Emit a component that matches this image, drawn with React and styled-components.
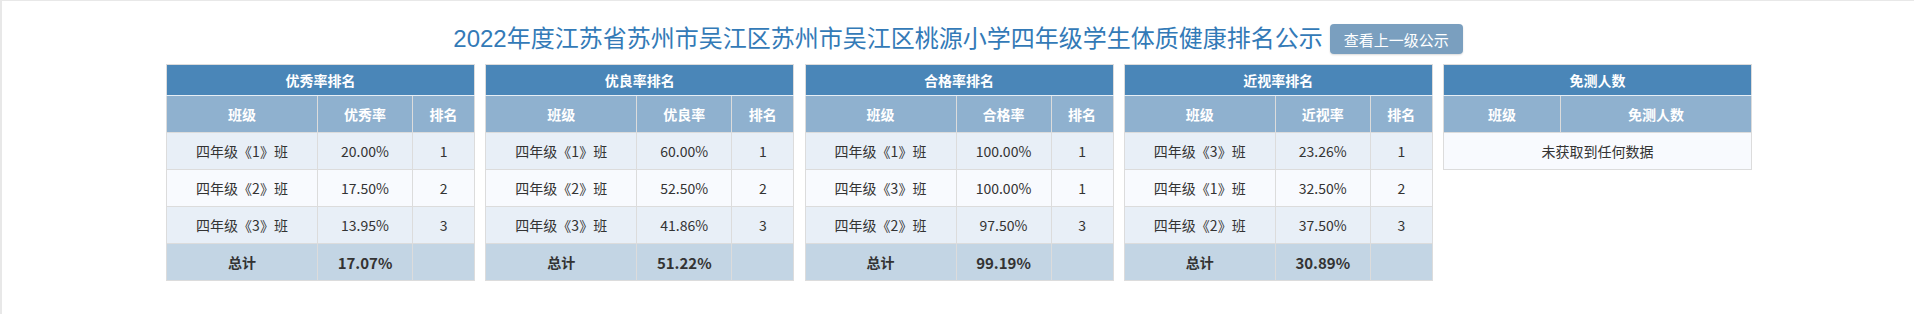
import React from 'react';
import styled, { createGlobalStyle } from 'styled-components';

const GlobalStyle = createGlobalStyle`
  html, body {
    margin: 0;
    padding: 0;
    background: #ffffff;
  }
  body {
    font-family: "Noto Sans CJK SC", "Noto Sans", sans-serif;
    font-size: 14px;
    color: #333333;
  }
`;

const Page = styled.div`
  box-sizing: border-box;
  width: 1914px;
  height: 314px;
  border-top: 1px solid #e8e8e8;
  border-left: 2px solid #e8e8e8;
  padding-top: 23px;
`;

const TitleBar = styled.div`
  display: flex;
  align-items: center;
  justify-content: center;
  gap: 7px;
  height: 30px;
`;

const Title = styled.h1`
  margin: 0;
  font-size: 24px;
  font-weight: normal;
  line-height: 30px;
  color: #337ab7;
  font-family: "Liberation Sans", "Noto Sans CJK SC", sans-serif;
`;

const UpButton = styled.button`
  height: 30px;
  padding: 0 14px;
  border: none;
  border-radius: 4px;
  background: #7a9fbf;
  color: #ffffff;
  font-family: "Noto Sans CJK SC", sans-serif;
  font-size: 15px;
  box-shadow: 0 1px 2px rgba(0, 0, 0, 0.15);
`;

const Boards = styled.div`
  display: grid;
  grid-template-columns: repeat(5, 309px);
  column-gap: 10.25px;
  justify-content: center;
  align-items: start;
  margin-top: 10px;
  padding-left: 2px;
`;

const Table = styled.table`
  width: 308px;
  border-collapse: collapse;
  border: 1px solid #dcdcdc;
  table-layout: fixed;
`;

const Caption = styled.th`
  height: 30px;
  padding: 0;
  background: #4a86b8;
  color: #ffffff;
  font-weight: bold;
  font-size: 14px;
  border: 1px solid #dcdcdc;
  border-bottom: 1px solid #e6eef5;
`;

const HeadCell = styled.th`
  height: 36px;
  padding: 0;
  background: #8fb1cf;
  color: #ffffff;
  font-weight: bold;
  font-size: 14px;
  border: 1px solid #dcdcdc;
`;

const Row = styled.tr`
  background: ${props => (props.$odd ? '#e8eff7' : '#f8fafe')};
`;

const Cell = styled.td`
  height: 36px;
  padding: 0;
  text-align: center;
  border: 1px solid #dcdcdc;
  color: #333333;
  font-size: 14px;
`;

const TotalRow = styled.tr`
  background: #c3d5e4;
`;

const TotalCell = styled(Cell)`
  font-weight: bold;
  font-size: ${props => (props.$num ? '15px' : '14px')};
`;

const boards = [
  {
    title: '优秀率排名',
    rate: '优秀率',
    rows: [
      ['四年级《1》班', '20.00%', '1'],
      ['四年级《2》班', '17.50%', '2'],
      ['四年级《3》班', '13.95%', '3'],
    ],
    total: '17.07%',
  },
  {
    title: '优良率排名',
    rate: '优良率',
    rows: [
      ['四年级《1》班', '60.00%', '1'],
      ['四年级《2》班', '52.50%', '2'],
      ['四年级《3》班', '41.86%', '3'],
    ],
    total: '51.22%',
  },
  {
    title: '合格率排名',
    rate: '合格率',
    rows: [
      ['四年级《1》班', '100.00%', '1'],
      ['四年级《3》班', '100.00%', '1'],
      ['四年级《2》班', '97.50%', '3'],
    ],
    total: '99.19%',
  },
  {
    title: '近视率排名',
    rate: '近视率',
    rows: [
      ['四年级《3》班', '23.26%', '1'],
      ['四年级《1》班', '32.50%', '2'],
      ['四年级《2》班', '37.50%', '3'],
    ],
    total: '30.89%',
  },
];

function RankBoard({ board }) {
  return (
    <Table>
      <colgroup>
        <col style={{ width: 151 }} />
        <col style={{ width: 95 }} />
        <col style={{ width: 62 }} />
      </colgroup>
      <thead>
        <tr>
          <Caption colSpan={3}>{board.title}</Caption>
        </tr>
        <tr>
          <HeadCell>班级</HeadCell>
          <HeadCell>{board.rate}</HeadCell>
          <HeadCell>排名</HeadCell>
        </tr>
      </thead>
      <tbody>
        {board.rows.map((r, i) => (
          <Row key={i} $odd={i % 2 === 0}>
            <Cell>{r[0]}</Cell>
            <Cell>{r[1]}</Cell>
            <Cell>{r[2]}</Cell>
          </Row>
        ))}
        <TotalRow>
          <TotalCell>总计</TotalCell>
          <TotalCell $num>{board.total}</TotalCell>
          <TotalCell />
        </TotalRow>
      </tbody>
    </Table>
  );
}

function ExemptBoard() {
  return (
    <Table>
      <colgroup>
        <col style={{ width: 117 }} />
        <col style={{ width: 191 }} />
      </colgroup>
      <thead>
        <tr>
          <Caption colSpan={2}>免测人数</Caption>
        </tr>
        <tr>
          <HeadCell>班级</HeadCell>
          <HeadCell>免测人数</HeadCell>
        </tr>
      </thead>
      <tbody>
        <Row>
          <Cell colSpan={2}>未获取到任何数据</Cell>
        </Row>
      </tbody>
    </Table>
  );
}

export default function App() {
  return (
    <>
      <GlobalStyle />
      <Page>
        <TitleBar>
          <Title>2022年度江苏省苏州市吴江区苏州市吴江区桃源小学四年级学生体质健康排名公示</Title>
          <UpButton>查看上一级公示</UpButton>
        </TitleBar>
        <Boards>
          {boards.map(b => (
            <RankBoard key={b.title} board={b} />
          ))}
          <ExemptBoard />
        </Boards>
      </Page>
    </>
  );
}
